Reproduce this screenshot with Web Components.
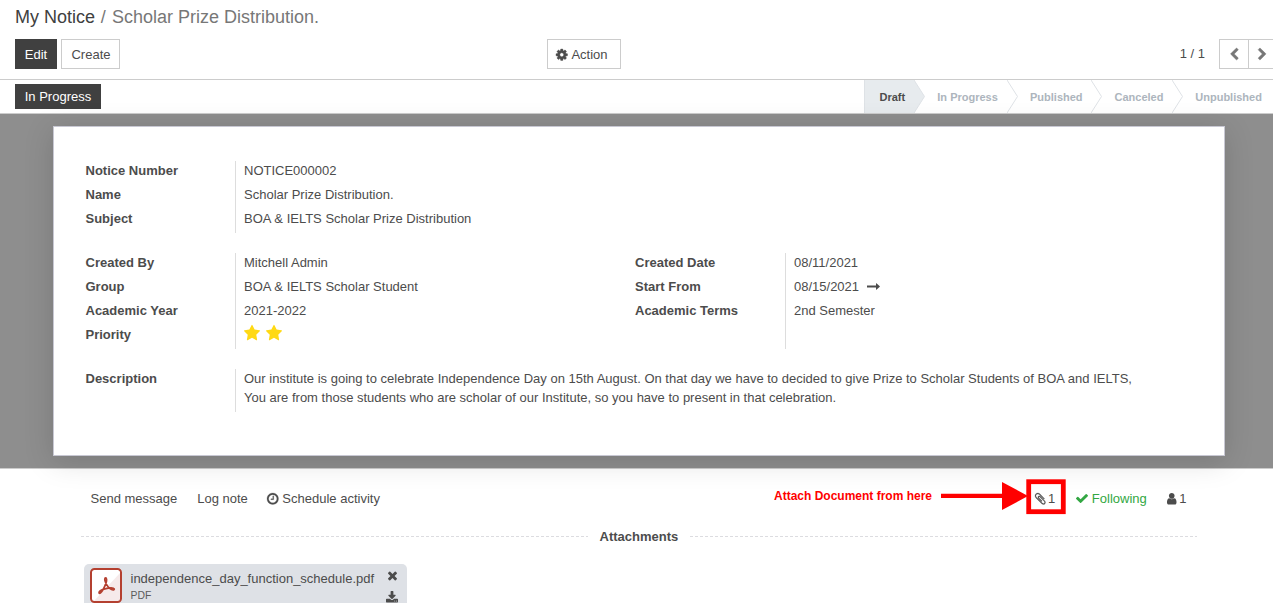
<!DOCTYPE html>
<html lang="en">
<head>
<meta charset="utf-8">
<title>My Notice</title>
<style>
html,body{margin:0;height:603px;overflow:hidden;background:#fff}
body{font:13px/20px "Liberation Sans",Arial,sans-serif;color:#4c4c4c}
</style>
</head>
<body>
<notice-page></notice-page>
<script>
const ICONS = {
cog:['128 128 1536 1536','M1152 896q0-106-75-181t-181-75-181 75-75 181 75 181 181 75 181-75 75-181zm512-109v222q0 12-8 23t-20 13l-185 28q-19 54-39 91 35 50 107 138 10 12 10 25t-9 23q-27 37-99 108t-94 71q-12 0-26-9l-138-108q-44 23-91 38-16 136-29 186-7 28-36 28h-222q-14 0-24.5-8.5t-11.500-21.500l-28-184q-49-16-90-37l-141 107q-10 9-25 9-14 0-25-11-126-114-165-168-7-10-7-23 0-12 8-23 15-21 51-66.500t54-70.500q-27-50-41-99l-183-27q-13-2-21-12.500t-8-23.500v-222q0-12 8-23t19-13l186-28q14-46 39-92-40-57-107-138-10-12-10-24 0-10 9-23 26-36 98.500-107.500t94.500-71.500q13 0 26 10l138 107q44-23 91-38 16-136 29-186 7-28 36-28h222q14 0 24.500 8.500t11.500 21.500l28 184q49 16 90 37l142-107q9-9 24-9 13 0 25 10 129 119 165 170 7 8 7 22 0 12-8 23-15 21-51 66.500t-54 70.500q26 50 41 98l183 28q13 2 21 12.500t8 23.500z'],
left:['320 20 1160 1640','M1427 301l-531 531 531 531q19 19 19 45t-19 45l-166 166q-19 19-45 19t-45-19l-742-742q-19-19-19-45t19-45l742-742q19-19 45-19t45 19l166 166q19 19 19 45t-19 45z'],
right:['310 20 1160 1640','M1363 877l-742 742q-19 19-45 19t-45-19l-166-166q-19-19-19-45t19-45l531-531-531-531q-19-19-19-45t19-45l166-166q19-19 45-19t45 19l742 742q19 19 19 45t-19 45z'],
star:['64 60 1664 1580','M1728 647q0 22-26 48l-363 354 86 500q1 7 1 20 0 21-10.500 35.500t-30.500 14.500q-19 0-40-12l-449-236-449 236q-22 12-40 12-21 0-31.500-14.500t-10.500-35.500q0-6 2-20l86-500-364-354q-25-27-25-48 0-37 56-46l502-73 225-455q19-41 49-41t49 41l225 455 502 73q56 9 56 46z'],
clock:['128 128 1536 1536','M1024 544v448q0 14-9 23t-23 9h-320q-14 0-23-9t-9-23v-64q0-14 9-23t23-9h224v-352q0-14 9-23t23-9h64q14 0 23 9t9 23zm416 352q0-148-73-273t-198-198-273-73-273 73-198 198-73 273 73 273 198 198 273 73 273-73 198-198 73-273zm224 0q0 209-103 385.500t-279.500 279.500-385.500 103-385.500-103-279.500-279.500-103-385.500 103-385.500 279.500-279.500 385.500-103 385.500 103 279.500 279.500 103 385.500z'],
check:['121 334 1550 1188','M1671 566q0 40-28 68l-724 724-136 136q-28 28-68 28t-68-28l-136-136-362-362q-28-28-28-68t28-68l136-136q28-28 68-28t68 28l294 295 656-657q28-28 68-28t68 28l136 136q28 28 28 68z'],
user:['256 128 1280 1536','M1536 1399q0 109-62.500 187t-150.500 78h-854q-88 0-150.500-78t-62.500-187q0-85 8.500-160.500t31.500-152 58.500-131 94-89 134.500-34.500q131 128 313 128t313-128q76 0 134.500 34.500t94 89 58.500 131 31.500 152 8.500 160.500zm-256-887q0 159-112.500 271.500t-271.500 112.500-271.500-112.500-112.500-271.500 112.500-271.500 271.500-112.500 271.500 112.500 112.500 271.500z'],
times:['302 434 1188 1188','M1490 1322q0 40-28 68l-136 136q-28 28-68 28t-68-28l-294-294-294 294q-28 28-68 28t-68-28l-136-136q-28-28-28-68t28-68l294-294-294-294q-28-28-28-68t28-68l136-136q28-28 68-28t68 28l294 294 294-294q28-28 68-28t68 28l136 136q28 28 28 68t-28 68l-294 294 294 294q28 28 28 68z'],
download:['64 0 1664 1536','M1344 1344q0-26-19-45t-45-19-45 19-19 45 19 45 45 19 45-19 19-45zm256 0q0-26-19-45t-45-19-45 19-19 45 19 45 45 19 45-19 19-45zm128-224v320q0 40-28 68t-68 28h-1472q-40 0-68-28t-28-68v-320q0-40 28-68t68-28h465l135 136q58 56 136 56t136-56l136-136h464q40 0 68 28t28 68zm-325-569q17 41-14 70l-448 448q-18 19-45 19t-45-19l-448-448q-31-29-14-70 17-39 59-39h256v-448q0-26 19-45t45-19h256q26 0 45 19t19 45v448h256q42 0 59 39z'],
clip:['196 132 1400 1528','M1596 1385q0 117-79 196t-196 79q-135 0-235-100l-777-776q-113-115-113-271 0-159 110-270t269-111q158 0 273 113l605 606q10 10 10 22 0 16-30.500 46.500t-46.500 30.500q-13 0-23-10l-606-607q-79-77-181-77-106 0-179 75t-73 181q0 105 76 181l776 777q63 63 145 63 64 0 106-42t42-106q0-82-63-145l-581-581q-26-24-60-24-29 0-48 19t-19 48q0 32 25 59l410 410q10 10 10 22 0 16-31 47t-47 31q-12 0-22-10l-410-410q-63-61-63-149 0-82 57-139t139-57q88 0 149 63l581 581q100 98 100 235z'],
arrow:['0 0 13 7','M0 2.500H9V.4Q9 0 9.400.2L12.800 3.200Q13 3.500 12.800 3.800L9.400 6.800Q9 7 9 6.600V4.500H0Z']
};
function define(name, html){
  const t=document.createElement('template');
  customElements.define(name, class extends HTMLElement{
    connectedCallback(){
      if(this.shadowRoot) return;
      t.innerHTML = typeof html==='function' ? html(this) : html;
      this.attachShadow({mode:'open'}).appendChild(t.content.cloneNode(true));
    }
  });
}
define('fa-icon', el=>{
  const [vb,d]=ICONS[el.getAttribute('name')];
  const sw=el.getAttribute('bold')||0;
  return `<style>:host{display:block;flex:none;width:${el.getAttribute('w')}px;height:${el.getAttribute('h')}px}svg{display:block;width:100%;height:100%;overflow:visible}</style>
  <svg viewBox="${vb}" preserveAspectRatio="none" fill="currentColor" stroke="currentColor" stroke-width="${sw}"><path d="${d}"/></svg>`;
});
define('ui-button', `<style>
:host{box-sizing:border-box;display:flex;align-items:center;justify-content:center;height:30px;border:1px solid #ccc;background:#fff;color:#4c4c4c;white-space:nowrap;padding-top:1px}
:host([primary]){background:#404040;border-color:#404040;color:#fff}
</style><slot></slot>`);
define('control-panel', `<style>
:host{box-sizing:border-box;display:block;height:80px;border-bottom:1px solid #ccc;padding:5px 0 0 15px}
h1{margin:0;font-size:18px;line-height:24px;font-weight:400;color:#777;white-space:pre}
h1 a{color:#404040}
.row{display:grid;grid-template-columns:532px 1fr auto;margin-top:10px}
.g{display:flex;gap:4px;align-items:center}
.edit{width:42px}.create{width:59px;padding-left:1px}.act{width:74px;gap:3.500px;padding-right:4px}
.count{margin-right:14px}
.p{width:30px;color:#777;padding:0 0 0 1px}
.n{width:25px;margin-left:-5px;border-right:0;padding-left:3px}
</style>
<h1><a>My Notice</a><span style="letter-spacing:.65px"> / </span>Scholar Prize Distribution.</h1>
<div class="row">
<div class="g"><ui-button class="edit" primary>Edit</ui-button><ui-button class="create">Create</ui-button></div>
<div class="g"><ui-button class="act"><fa-icon name="cog" w="11.500" h="11.500" bold="50"></fa-icon>Action</ui-button></div>
<div class="g"><span class="count">1 / 1</span><ui-button class="p" style="margin-left:-4px"><fa-icon name="left" w="8.500" h="12" bold="60"></fa-icon></ui-button><ui-button class="p n"><fa-icon name="right" w="8.500" h="12" bold="60"></fa-icon></ui-button></div>
</div>`);
define('status-step', el=>`<style>
:host{box-sizing:border-box;position:relative;display:block;height:33px;width:${el.getAttribute('w')}px;padding-left:${el.getAttribute('pad')}px;font-size:11px;font-weight:700;line-height:34px;color:#adb5bd;white-space:nowrap}
:host([active]){background:#e7ebee;color:#4c4c4c;border-left:1px solid #dee2e6}
svg{position:absolute;right:-11px;top:0;display:block}
:host([last]) svg{display:none}
</style><slot></slot><svg width="11" height="33"><path d="M0 0L10.500 16.500L0 33" fill="${el.hasAttribute('active')?'#e7ebee':'#fff'}" stroke="#dee2e6"/></svg>`);
define('status-bar', `<style>
:host{box-sizing:border-box;display:flex;justify-content:space-between;height:34px;border-bottom:1px solid #ccc;padding-left:15px}
.b{width:86px;height:25px;margin-top:4px;padding-top:1px}
.s{display:flex}
</style><ui-button class="b" primary>In Progress</ui-button>
<div class="s"><status-step active w="50" pad="14.500">Draft</status-step><status-step w="93" pad="23.300">In Progress</status-step><status-step w="84" pad="23">Published</status-step><status-step w="81" pad="23.500">Canceled</status-step><status-step last w="101" pad="23.300">Unpublished</status-step></div>`);
define('field-group', `<style>
:host{display:grid;grid-template-columns:149.500px 1fr}
.l,.v{display:flex;flex-direction:column}
.v{border-left:1px solid #ddd;padding-left:8px}
::slotted(*){height:24px;line-height:20px;white-space:nowrap;box-sizing:border-box}
::slotted(b){font-weight:700}
</style><div class="l"><slot name="l"></slot></div><div class="v"><slot></slot></div>`);
define('notice-sheet', `<style>
:host{box-sizing:border-box;display:block;width:1172px;height:330px;margin:0 auto 0 53px;background:#fff;border:1px solid #c8c8d3;box-shadow:0 5px 28px rgba(0,0,0,.15);padding:34px 31px 0 31.500px;position:relative}
.two{display:grid;grid-template-columns:549.500px 1fr;margin:20px 0}
.two>:last-child{grid-template-columns:150px 1fr}
.f{display:flex;align-items:center;gap:8px;height:20px}
.f fa-icon{margin-top:-1px}
.st{display:flex;gap:5.500px;padding-top:0;margin-top:-.5px;color:#ffd914}
.d div{height:19px}
</style>
<field-group><b slot="l">Notice Number</b><b slot="l">Name</b><b slot="l">Subject</b><span>NOTICE000002</span><span>Scholar Prize Distribution.</span><span>BOA &amp; IELTS Scholar Prize Distribution</span></field-group>
<div class="two">
<field-group><b slot="l">Created By</b><b slot="l">Group</b><b slot="l">Academic Year</b><b slot="l">Priority</b><span>Mitchell Admin</span><span>BOA &amp; IELTS Scholar Student</span><span>2021-2022</span><div><div class="st"><fa-icon name="star" w="16" h="15.500"></fa-icon><fa-icon name="star" w="16" h="15.500"></fa-icon></div></div></field-group>
<field-group><b slot="l">Created Date</b><b slot="l">Start From</b><b slot="l">Academic Terms</b><span>08/11/2021</span><div><div class="f">08/15/2021<fa-icon name="arrow" w="13" h="7"></fa-icon></div></div><span>2nd Semester</span></field-group>
</div>
<field-group><b slot="l">Description</b><div class="d" style="height:43px"><div>Our institute is going to celebrate Independence Day on 15th August. On that day we have to decided to give Prize to Scholar Students of BOA and IELTS,</div><div>You are from those students who are scholar of our Institute, so you have to present in that celebration.</div></div></field-group>`);
define('attachment-card', `<style>
:host{box-sizing:border-box;display:grid;grid-template-columns:32px 1fr 12px;column-gap:8.500px;width:323px;height:46px;margin-left:3px;background:#dee1e6;border-radius:5px;padding:4px 9px 0 6px}
.p{width:32px;height:35px;display:block}
.n{line-height:20px;white-space:nowrap;padding-top:1px}
.t{font-size:10.400px;line-height:13px;color:#5c5c5c}
.a{display:flex;flex-direction:column;align-items:center;gap:10.500px;padding-top:3.500px}
</style>
<svg class="p" viewBox="0 0 32 35"><rect x="1" y="1" width="30" height="33" rx="3.500" fill="#fff"/><path d="M30 5V34H3Z" fill="#f6eaea"/><rect x="1" y="1" width="30" height="33" rx="3.500" fill="none" stroke="#b44030" stroke-width="2"/><path d="M15.600 9.800C14.500 9.800 14.500 12 15.500 14.200C16.800 17.500 19.200 20.300 21.600 21.600C23.200 22.400 24.600 21.800 24.200 20.800C23.600 19.600 19.500 19.500 15.800 20.600C12.300 21.500 8.800 23.400 9 24.900C9.200 26 11.300 25 12.800 22.200C14.800 18.500 16.800 13.700 16.600 11.500C16.500 10.300 16.200 9.800 15.600 9.800Z" fill="none" stroke="#b44030" stroke-width="1.700"/></svg>
<div><div class="n">independence_day_function_schedule.pdf</div><div class="t">PDF</div></div>
<div class="a"><fa-icon name="times" w="9" h="9"></fa-icon><fa-icon name="download" w="12" h="11.500"></fa-icon></div>`);
define('chatter-panel', `<style>
:host{display:block;padding:20px 76px 0 81px;position:relative}
.bar,.bar span{display:flex;align-items:center}
.bar{height:20px;padding-left:9.500px}
.bar>*{white-space:nowrap}
.sp{flex:1}
.h{display:flex;align-items:center;gap:12px;height:20px;margin-top:18px;font-weight:700}
.h:before,.h:after{content:"";flex:1;height:1px;margin-top:-1px;background:repeating-linear-gradient(90deg,#dcdce0 0 3px,transparent 3px 5px)}
.h:before{flex:none;width:506.500px}
attachment-card{margin-top:17px}
</style>
<div class="bar"><span>Send message</span><span style="margin-left:20px">Log note</span><span style="margin-left:19.500px;gap:3.500px"><fa-icon name="clock" w="11.500" h="11.500" bold="30"></fa-icon>Schedule activity</span><i class="sp"></i>
<span style="gap:2.500px"><fa-icon name="clip" w="10.500" h="11.500" bold="30"></fa-icon>1</span><span style="gap:4px;color:#33a743;margin-left:20.500px"><fa-icon name="check" w="12" h="9" style="margin-top:-1px"></fa-icon>Following</span><span style="gap:3px;margin:0 10.500px 0 20px"><fa-icon name="user" w="9.500" h="11.500" style="margin-top:-1px"></fa-icon>1</span></div>
<div class="h">Attachments</div>
<attachment-card></attachment-card>`);
define('callout-note', `<style>
:host{position:absolute;left:774px;top:479px;display:flex;align-items:center;height:36px;color:#f00;font-weight:700;font-size:12px;white-space:nowrap}
.t{width:167px;line-height:14px;margin-top:-2px}
svg{display:block;flex:none}
</style><span class="t">Attach Document from here</span><svg width="126" height="36"><path d="M0 14.800H61V3L87 17L61 31V19H0Z" fill="#f00"/><rect x="87.700" y="2.700" width="34.600" height="30" fill="none" stroke="#f00" stroke-width="4.800"/></svg>`);
define('notice-page', `<style>
:host{display:block;width:1273px;height:603px;overflow:hidden;position:relative}
.bg{box-sizing:border-box;height:355px;background:#8e8e8e;border-bottom:1px solid #ccc;padding-top:12px}
</style><control-panel></control-panel><status-bar></status-bar><div class="bg"><notice-sheet></notice-sheet></div><chatter-panel></chatter-panel><callout-note></callout-note>`);
</script>
</body>
</html>
